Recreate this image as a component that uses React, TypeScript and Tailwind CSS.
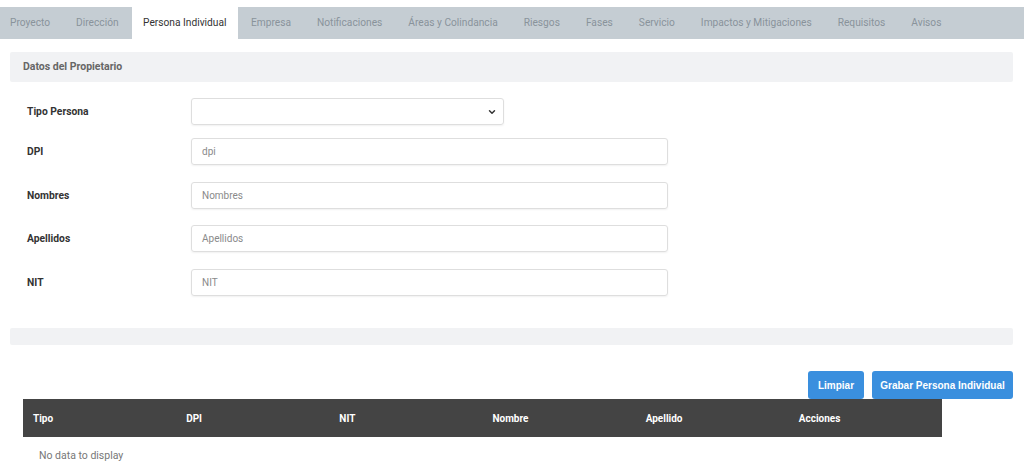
import React from "react";

const tabs = [
  "Proyecto",
  "Dirección",
  "Persona Individual",
  "Empresa",
  "Notificaciones",
  "Áreas y Colindancia",
  "Riesgos",
  "Fases",
  "Servicio",
  "Impactos y Mitigaciones",
  "Requisitos",
  "Avisos",
];

const fields = [
  { label: "DPI", placeholder: "dpi", mt: "mt-[13px]" },
  { label: "Nombres", placeholder: "Nombres", mt: "mt-[17px]" },
  { label: "Apellidos", placeholder: "Apellidos", mt: "mt-[16px]" },
  { label: "NIT", placeholder: "NIT", mt: "mt-[17px]" },
];

const columns = ["Tipo", "DPI", "NIT", "Nombre", "Apellido", "Acciones"];

export default function App() {
  return (
    <div className="w-[1024px] h-[472px] bg-white overflow-hidden font-['Roboto',sans-serif] text-[10px]">
      {/* tabs */}
      <div className="mt-[7px] h-[32px] flex bg-[#c5cdd3] text-[10.2px]">
        {tabs.map((t) => (
          <div
            key={t}
            className={
              t === "Persona Individual"
                ? "px-[11.5px] flex items-center bg-white text-[#333]"
                : "px-[13px] first:pl-[10px] flex items-center text-[#89939b]"
            }
          >
            {t}
          </div>
        ))}
      </div>

      <div className="px-[10px] pr-[11px]">
        <div className="mt-[13px] h-[30px] bg-[#f1f2f4] rounded-[2px] flex items-center pl-[13px] font-bold text-[#666] text-[10.5px]">
          Datos del Propietario
        </div>

        {/* form */}
        <div className="mt-[16px] pl-[17px]">
          <div className="flex items-center">
            <div className="w-[164px] font-bold text-[#333] text-[10.3px]">Tipo Persona</div>
            <div className="w-[313px] h-[27px] border border-[#dedede] rounded-[3px] shadow-[0_1px_2px_rgba(0,0,0,0.06)] flex items-center justify-end pr-[6px]">
              <svg width="10" height="10" viewBox="0 0 24 24" fill="none" stroke="#333" strokeWidth="3.5" strokeLinecap="round" strokeLinejoin="round">
                <path d="M6 9l6 6 6-6" />
              </svg>
            </div>
          </div>
          {fields.map((f) => (
            <div key={f.label} className={`flex items-center ${f.mt}`}>
              <div className="w-[164px] font-bold text-[#333] text-[10.3px]">{f.label}</div>
              <div className="w-[477px] h-[27px] border border-[#dedede] rounded-[3px] shadow-[0_1px_2px_rgba(0,0,0,0.06)] flex items-center pl-[10px] text-[#8a8a8a]">
                {f.placeholder}
              </div>
            </div>
          ))}
        </div>

        <div className="mt-[32px] h-[17px] bg-[#f1f2f4] rounded-[2px]" />

        {/* buttons */}
        <div className="mt-[26px] flex justify-end gap-[8px] font-['Liberation_Sans',sans-serif] font-bold text-white">
          <button className="h-[28px] w-[56px] bg-[#3a8fde] rounded-[3px]">Limpiar</button>
          <button className="h-[28px] w-[141px] bg-[#3a8fde] rounded-[3px]">Grabar Persona Individual</button>
        </div>

        {/* table */}
        <div className="ml-[13px] w-[919px]">
          <div className="h-[38px] bg-[#444] grid grid-cols-6 items-center font-bold text-white">
            {columns.map((c) => (
              <div key={c} className="pl-[10px]">
                {c}
              </div>
            ))}
          </div>
          <div className="pl-[16px] pt-[11px] text-[#777] text-[10.5px]">No data to display</div>
        </div>
      </div>
    </div>
  );
}
